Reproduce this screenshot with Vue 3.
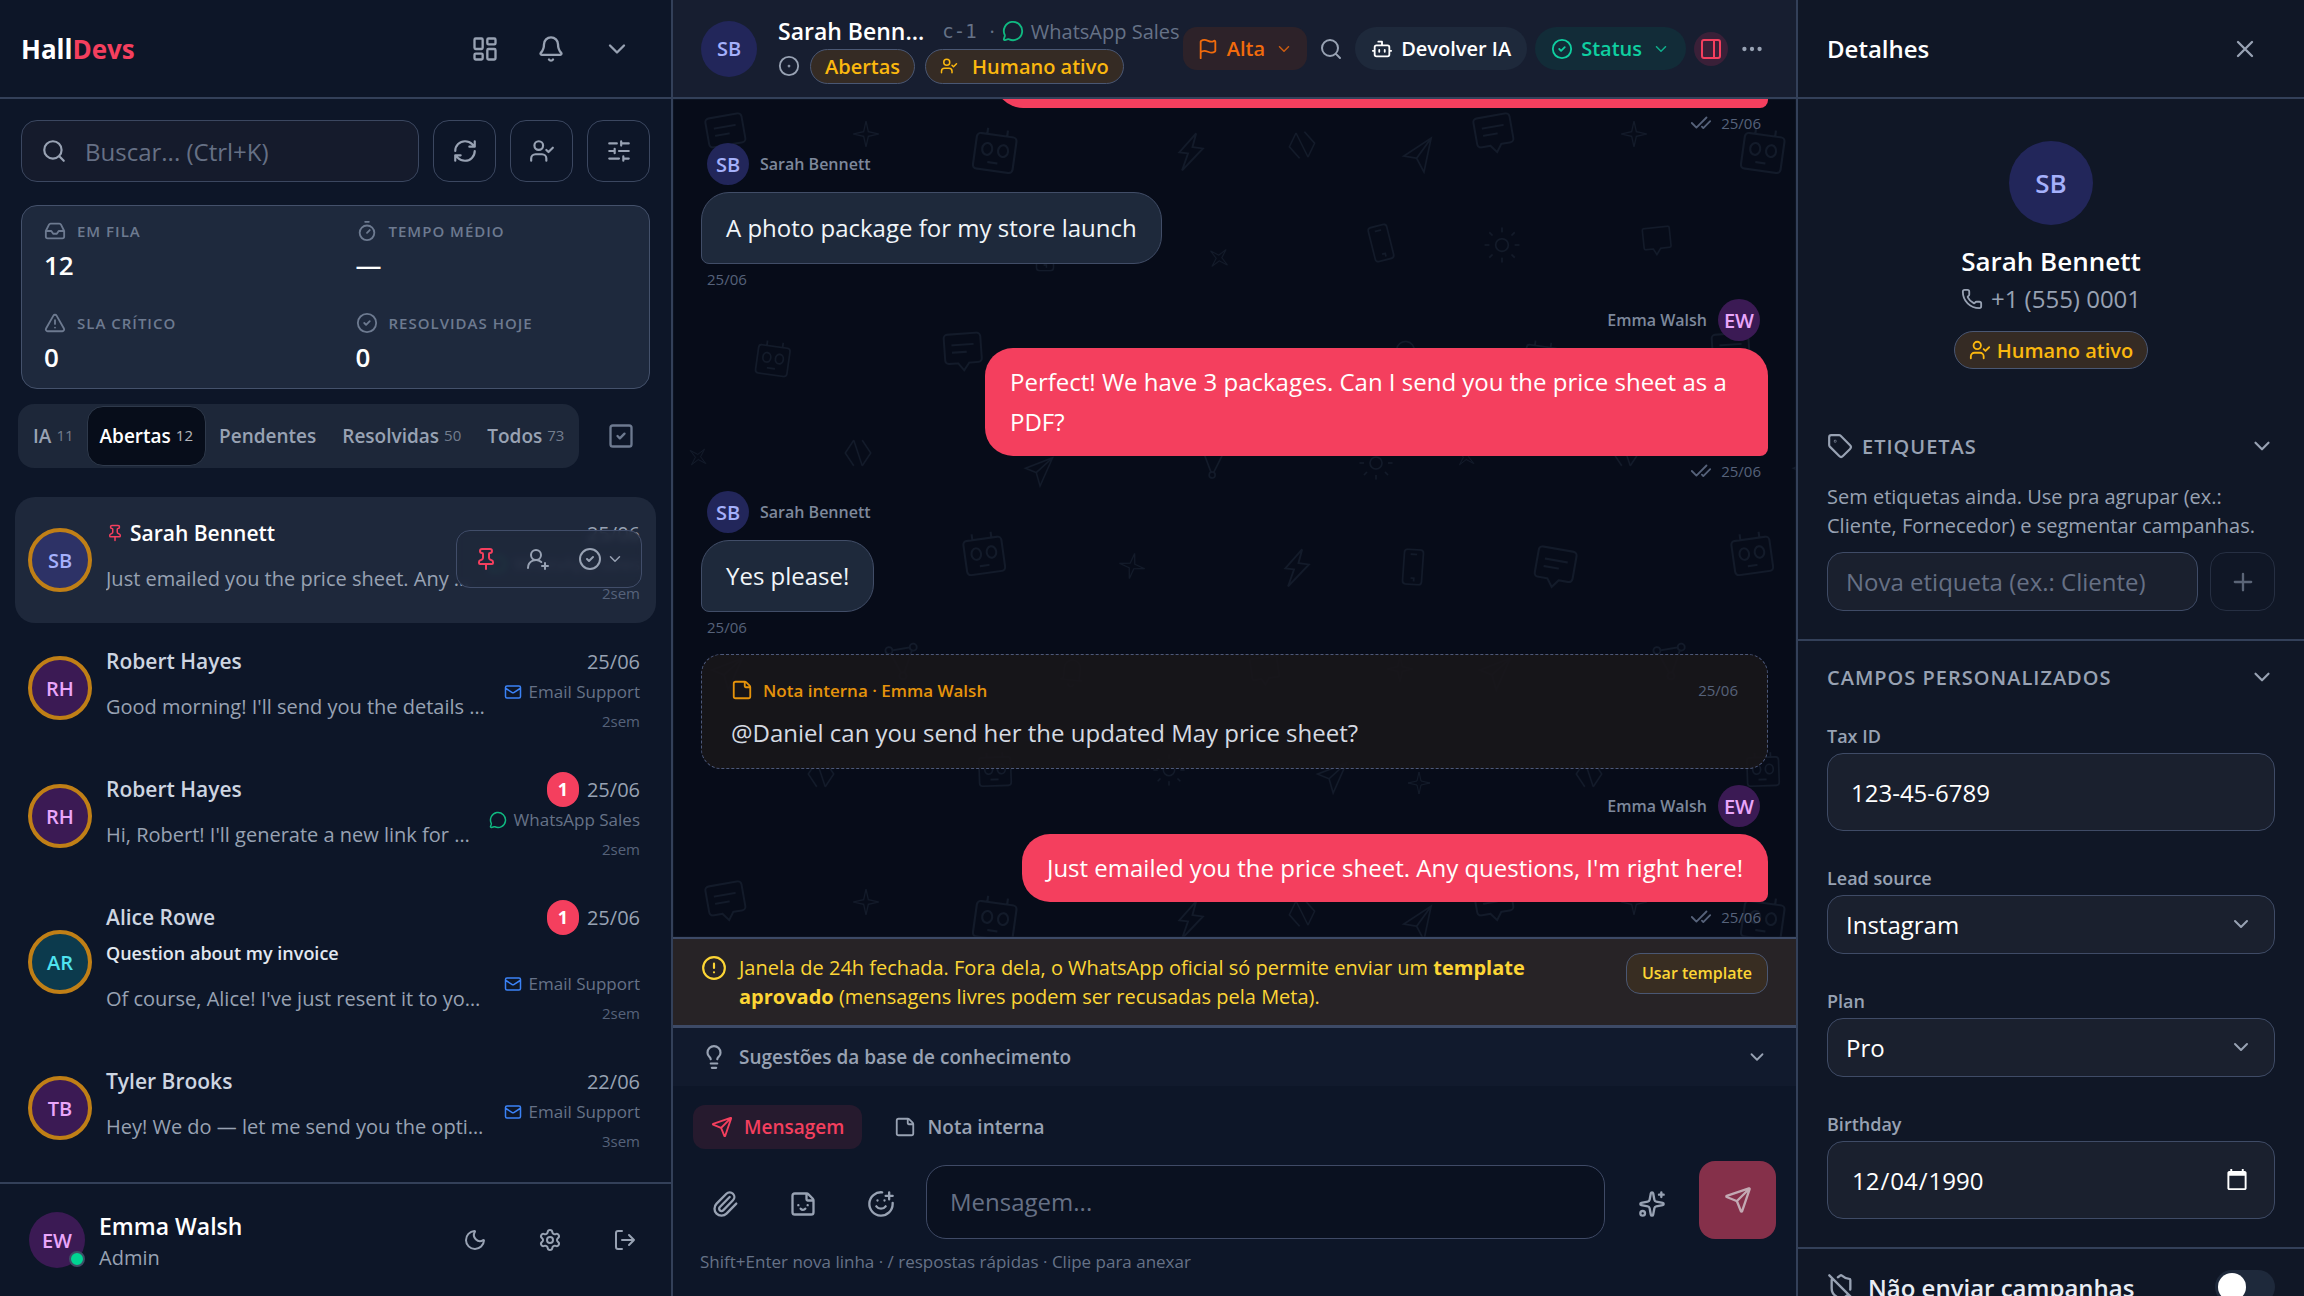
<template>
  <div class="app">
    <aside class="sidebar">
      <header class="bar sidebar-bar">
        <h1 class="logo">Hall<span>Devs</span></h1>
        <nav class="bar-actions">
          <button class="icon-btn" aria-label="Painel"><Icon name="dashboard" class="i28" /></button>
          <button class="icon-btn" aria-label="Notificações"><Icon name="bell" class="i28" /></button>
          <button class="icon-btn" aria-label="Mais"><Icon name="chevron" class="i28" /></button>
        </nav>
      </header>

      <div class="search-row">
        <label class="search">
          <Icon name="search" class="i26" />
          <input v-model="query" type="text" placeholder="Buscar... (Ctrl+K)" aria-label="Buscar" />
        </label>
        <button class="square-btn" aria-label="Atualizar"><Icon name="refresh" class="i26" /></button>
        <button class="square-btn" aria-label="Atribuídas"><Icon name="userCheck" class="i26" /></button>
        <button class="square-btn" aria-label="Filtros"><Icon name="sliders" class="i26" /></button>
      </div>

      <dl class="stats">
        <div v-for="stat in stats" :key="stat.label" class="stat">
          <dt><Icon :name="stat.icon" class="i22" />{{ stat.label }}</dt>
          <dd>{{ stat.value }}</dd>
        </div>
      </dl>

      <div class="tabs-row">
        <div class="tabs">
          <button
            v-for="tab in tabs"
            :key="tab.label"
            :class="['tab', { active: tab.label === activeTab }]"
            @click="activeTab = tab.label"
          >
            {{ tab.label }}<span v-if="tab.count" class="tab-count">{{ tab.count }}</span>
          </button>
        </div>
        <button class="icon-btn select-all" aria-label="Selecionar"><Icon name="checkSquare" class="i28" /></button>
      </div>

      <ul class="conversations">
        <li v-for="(chat, index) in chats" :key="index" :class="['chat', { selected: index === 0 }]">
          <span :class="['avatar', 'ringed', chat.tone]">{{ chat.initials }}</span>
          <div class="chat-body">
            <div class="chat-top">
              <span class="chat-name"><Icon v-if="index === 0" name="pin" class="i18 pink" />{{ chat.name }}</span>
              <span class="chat-date"><b v-if="chat.unread" class="badge">{{ chat.unread }}</b>{{ chat.date }}</span>
            </div>
            <p v-if="chat.subject" class="chat-subject">{{ chat.subject }}</p>
            <div class="chat-bottom">
              <p class="chat-preview">{{ chat.preview }}</p>
              <div class="chat-meta">
                <span class="chat-channel">
                  <Icon :name="chat.mail ? 'mail' : 'message'" :class="['i18', chat.mail ? 'blue' : 'green']" />
                  {{ chat.mail ? 'Email Support' : 'WhatsApp Sales' }}
                </span>
                <span class="chat-age">{{ chat.age }}</span>
              </div>
            </div>
          </div>
          <div v-if="index === 0" class="quick-actions">
            <button aria-label="Desafixar"><Icon name="pin" class="i24 pink" /></button>
            <button aria-label="Atribuir"><Icon name="userPlus" class="i24" /></button>
            <button aria-label="Status"><Icon name="circleCheck" class="i24" /><Icon name="chevron" class="i18" /></button>
          </div>
        </li>
      </ul>

      <footer class="me">
        <span class="avatar medium purple">EW<i class="online"></i></span>
        <div class="me-text">
          <strong>Emma Walsh</strong>
          <span>Admin</span>
        </div>
        <div class="me-actions">
          <button class="icon-btn" aria-label="Tema"><Icon name="moon" class="i24" /></button>
          <button class="icon-btn" aria-label="Configurações"><Icon name="settings" class="i24" /></button>
          <button class="icon-btn" aria-label="Sair"><Icon name="logout" class="i24" /></button>
        </div>
      </footer>
    </aside>

    <main class="thread">
      <header class="bar thread-bar">
        <span class="avatar medium indigo">SB</span>
        <div class="thread-info">
          <div class="thread-line">
            <h2>Sarah Benn…</h2>
            <code>c-1</code>
            <span class="thread-channel">· <Icon name="message" class="i22 green" />WhatsApp Sales</span>
          </div>
          <div class="thread-line">
            <Icon name="circleDot" class="i22" />
            <span class="pill">Abertas</span>
            <span class="pill spaced"><Icon name="userCheck" class="i18" />Humano ativo</span>
          </div>
        </div>
        <div class="thread-actions">
          <button class="chip priority"><Icon name="flag" class="i22" />Alta<Icon name="chevron" class="i18 caret" /></button>
          <button class="icon-btn tight" aria-label="Buscar na conversa"><Icon name="search" class="i24" /></button>
          <button class="chip neutral"><Icon name="bot" class="i22" />Devolver IA</button>
          <button class="chip status"><Icon name="circleCheck" class="i22" />Status<Icon name="chevron" class="i18 caret" /></button>
          <button class="icon-btn panel-toggle" aria-label="Painel de detalhes"><Icon name="panel" class="i24" /></button>
          <button class="icon-btn tight" aria-label="Mais opções"><Icon name="dots" class="i26" /></button>
        </div>
      </header>

      <section class="messages">
        <svg class="wallpaper" aria-hidden="true">
          <defs>
            <pattern id="doodles" width="768" height="768" patternUnits="userSpaceOnUse">
              <g
                v-for="(d, i) in doodles"
                :key="i"
                :transform="`translate(${d[1]} ${d[2]}) rotate(${d[4]}) scale(${d[3] / 24}) translate(-12 -12)`"
              >
                <path :d="shapes[d[0]]" />
              </g>
            </pattern>
          </defs>
          <rect width="100%" height="100%" fill="url(#doodles)" />
        </svg>

        <template v-for="(msg, index) in messages" :key="index">
          <article v-if="msg.note" class="note">
            <div class="note-head">
              <Icon name="note" class="i22" />
              <strong>Nota interna · Emma Walsh</strong>
              <time>25/06</time>
            </div>
            <p>{{ msg.text }}</p>
          </article>
          <article v-else :class="['message', msg.mine ? 'mine' : 'theirs']">
            <div v-if="msg.text" class="message-head">
              <span :class="['avatar', 'small', msg.mine ? 'purple' : 'indigo']">{{ msg.mine ? 'EW' : 'SB' }}</span>
              {{ msg.mine ? 'Emma Walsh' : 'Sarah Bennett' }}
            </div>
            <p :class="['bubble', { blank: !msg.text }]">{{ msg.text }}</p>
            <div class="stamp"><Icon v-if="msg.mine" name="checks" class="i22" /><time>25/06</time></div>
          </article>
        </template>
      </section>

      <section class="window-notice">
        <Icon name="alert" class="i26" />
        <p>
          Janela de 24h fechada. Fora dela, o WhatsApp oficial só permite enviar um
          <b>template aprovado</b> (mensagens livres podem ser recusadas pela Meta).
        </p>
        <button>Usar template</button>
      </section>

      <button class="suggestions">
        <Icon name="bulb" class="i26" />
        Sugestões da base de conhecimento
        <Icon name="chevron" class="i22 push" />
      </button>

      <form class="composer" @submit.prevent>
        <div class="modes">
          <button type="button" class="mode active"><Icon name="send" class="i22" />Mensagem</button>
          <button type="button" class="mode"><Icon name="note" class="i22" />Nota interna</button>
        </div>
        <div class="write-row">
          <div class="tools">
            <button type="button" class="icon-btn tool" aria-label="Anexar"><Icon name="clip" class="i28" /></button>
            <button type="button" class="icon-btn tool" aria-label="Figurinha"><Icon name="sticker" class="i28" /></button>
            <button type="button" class="icon-btn tool" aria-label="Emoji"><Icon name="smile" class="i28" /></button>
          </div>
          <textarea v-model="draft" rows="1" placeholder="Mensagem..." aria-label="Mensagem"></textarea>
          <button type="button" class="icon-btn magic" aria-label="Assistente"><Icon name="sparkles" class="i28" /></button>
          <button class="send" aria-label="Enviar"><Icon name="send" class="i28" /></button>
        </div>
        <p class="hint">Shift+Enter nova linha · / respostas rápidas · Clipe para anexar</p>
      </form>
    </main>

    <aside class="details">
      <header class="bar details-bar">
        <h2>Detalhes</h2>
        <button class="icon-btn" aria-label="Fechar"><Icon name="close" class="i28" /></button>
      </header>

      <section class="profile">
        <span class="avatar large indigo">SB</span>
        <h3>Sarah Bennett</h3>
        <p><Icon name="phone" class="i22" />+1 (555) 0001</p>
        <span class="pill profile-pill"><Icon name="userCheck" class="i22" />Humano ativo</span>
      </section>

      <section class="block">
        <button class="block-head"><Icon name="tag" class="i26" />ETIQUETAS<Icon name="chevron" class="i26 push" /></button>
        <p class="block-text">Sem etiquetas ainda. Use pra agrupar (ex.: Cliente, Fornecedor) e segmentar campanhas.</p>
        <div class="tag-row">
          <input v-model="newTag" class="field" type="text" placeholder="Nova etiqueta (ex.: Cliente)" aria-label="Nova etiqueta" />
          <button class="add-tag" aria-label="Adicionar"><Icon name="plus" class="i28" /></button>
        </div>
      </section>

      <section class="block lined">
        <button class="block-head">CAMPOS PERSONALIZADOS<Icon name="chevron" class="i26 push" /></button>
        <div class="form-item">
          <label for="tax">Tax ID</label>
          <input id="tax" v-model="taxId" class="field tall" type="text" />
        </div>
        <div class="form-item">
          <label for="lead">Lead source</label>
          <div class="select">
            <select id="lead" class="field"><option>Instagram</option></select>
            <Icon name="chevron" class="i24" />
          </div>
        </div>
        <div class="form-item">
          <label for="plan">Plan</label>
          <div class="select">
            <select id="plan" class="field"><option>Pro</option></select>
            <Icon name="chevron" class="i24" />
          </div>
        </div>
        <div class="form-item">
          <label for="birthday">Birthday</label>
          <input id="birthday" v-model="birthday" class="field tall" type="date" />
        </div>
      </section>

      <section class="block lined optout">
        <Icon name="shieldOff" class="i28" />
        <label for="optout">Não enviar campanhas</label>
        <input id="optout" v-model="optOut" class="switch" type="checkbox" role="switch" />
      </section>
    </aside>
  </div>
</template>

<script setup>
import { h, ref } from 'vue'

const paths = {
  dashboard: 'M4 3h5a1 1 0 0 1 1 1v7a1 1 0 0 1-1 1H4a1 1 0 0 1-1-1V4a1 1 0 0 1 1-1z M15 3h5a1 1 0 0 1 1 1v3a1 1 0 0 1-1 1h-5a1 1 0 0 1-1-1V4a1 1 0 0 1 1-1z M15 12h5a1 1 0 0 1 1 1v7a1 1 0 0 1-1 1h-5a1 1 0 0 1-1-1v-7a1 1 0 0 1 1-1z M4 16h5a1 1 0 0 1 1 1v3a1 1 0 0 1-1 1H4a1 1 0 0 1-1-1v-3a1 1 0 0 1 1-1z',
  bell: 'M10.268 21a2 2 0 0 0 3.464 0 M3.262 15.326A1 1 0 0 0 4 17h16a1 1 0 0 0 .74-1.673C19.41 13.956 18 12.499 18 8A6 6 0 0 0 6 8c0 4.499-1.411 5.956-2.738 7.326',
  chevron: 'm6 9 6 6 6-6',
  search: 'm21 21-4.34-4.34 M11 3a8 8 0 1 0 0 16a8 8 0 1 0 0-16z',
  refresh: 'M3 12a9 9 0 0 1 9-9 9.75 9.75 0 0 1 6.74 2.74L21 8 M21 3v5h-5 M21 12a9 9 0 0 1-9 9 9.75 9.75 0 0 1-6.74-2.74L3 16 M8 16H3v5',
  userCheck: 'm16 11 2 2 4-4 M16 21v-2a4 4 0 0 0-4-4H6a4 4 0 0 0-4 4v2 M9 3a4 4 0 1 0 0 8a4 4 0 1 0 0-8z',
  sliders: 'M10 5H3 M12 19H3 M14 3v4 M16 17v4 M21 12h-9 M21 19h-5 M21 5h-7 M8 10v4 M8 12H3',
  inbox: 'M22 12h-6l-2 3h-4l-2-3H2 M5.45 5.11 2 12v6a2 2 0 0 0 2 2h16a2 2 0 0 0 2-2v-6l-3.45-6.89A2 2 0 0 0 16.76 4H7.24a2 2 0 0 0-1.79 1.11z',
  timer: 'M10 2h4 M12 14l3-3 M12 6a8 8 0 1 0 0 16a8 8 0 1 0 0-16z',
  triangle: 'm21.73 18-8-14a2 2 0 0 0-3.48 0l-8 14A2 2 0 0 0 4 21h16a2 2 0 0 0 1.73-3 M12 9v4 M12 17h.01',
  circleCheck: 'M12 2a10 10 0 1 0 0 20a10 10 0 1 0 0-20z m-3 10 2 2 4-4',
  checkSquare: 'M5 3h14a2 2 0 0 1 2 2v14a2 2 0 0 1-2 2H5a2 2 0 0 1-2-2V5a2 2 0 0 1 2-2z M9 12l2 2 4-4',
  pin: 'M12 17v5 M9 10.76a2 2 0 0 1-1.11 1.79l-1.78.9A2 2 0 0 0 5 15.24V16a1 1 0 0 0 1 1h12a1 1 0 0 0 1-1v-.76a2 2 0 0 0-1.11-1.79l-1.78-.9A2 2 0 0 1 15 10.76V7a1 1 0 0 1 1-1 2 2 0 0 0 0-4H8a2 2 0 0 0 0 4 1 1 0 0 1 1 1z',
  userPlus: 'M2 21a8 8 0 0 1 13.292-6 M10 3a5 5 0 1 0 0 10a5 5 0 1 0 0-10z M19 16v6 M22 19h-6',
  mail: 'm22 7-8.991 5.727a2 2 0 0 1-2.009 0L2 7 M4 4h16a2 2 0 0 1 2 2v12a2 2 0 0 1-2 2H4a2 2 0 0 1-2-2V6a2 2 0 0 1 2-2z',
  message: 'M2.992 16.342a2 2 0 0 1 .094 1.167l-1.065 3.29a1 1 0 0 0 1.236 1.168l3.413-.998a2 2 0 0 1 1.099.092 10 10 0 1 0-4.777-4.719',
  moon: 'M20.985 12.486a9 9 0 1 1-9.473-9.472c.405-.022.617.46.402.803a6 6 0 0 0 8.268 8.268c.344-.215.825-.004.803.401',
  settings: 'M9.671 4.136a2.34 2.34 0 0 1 4.659 0 2.34 2.34 0 0 0 3.319 1.915 2.34 2.34 0 0 1 2.33 4.033 2.34 2.34 0 0 0 0 3.831 2.34 2.34 0 0 1-2.33 4.033 2.34 2.34 0 0 0-3.319 1.915 2.34 2.34 0 0 1-4.659 0 2.34 2.34 0 0 0-3.32-1.915 2.34 2.34 0 0 1-2.33-4.033 2.34 2.34 0 0 0 0-3.831A2.34 2.34 0 0 1 6.35 6.051a2.34 2.34 0 0 0 3.319-1.915 M12 9a3 3 0 1 0 0 6a3 3 0 1 0 0-6z',
  logout: 'm16 17 5-5-5-5 M21 12H9 M9 21H5a2 2 0 0 1-2-2V5a2 2 0 0 1 2-2h4',
  circleDot: 'M12 2a10 10 0 1 0 0 20a10 10 0 1 0 0-20z M12 11.5a.5 .5 0 1 0 0 1a.5 .5 0 1 0 0-1z',
  flag: 'M4 22V4a1 1 0 0 1 .4-.8A6 6 0 0 1 8 2c3 0 5 2 7.333 2q2 0 3.067-.8A1 1 0 0 1 20 4v10a1 1 0 0 1-.4.8A6 6 0 0 1 16 16c-3 0-5-2-8-2a6 6 0 0 0-4 1.528',
  bot: 'M12 8V4H8 M6 8h12a2 2 0 0 1 2 2v8a2 2 0 0 1-2 2H6a2 2 0 0 1-2-2v-8a2 2 0 0 1 2-2z M2 14h2 M20 14h2 M15 13v2 M9 13v2',
  panel: 'M5 3h14a2 2 0 0 1 2 2v14a2 2 0 0 1-2 2H5a2 2 0 0 1-2-2V5a2 2 0 0 1 2-2z M15 3v18',
  dots: 'M12 11a1 1 0 1 0 0 2a1 1 0 1 0 0-2z M19 11a1 1 0 1 0 0 2a1 1 0 1 0 0-2z M5 11a1 1 0 1 0 0 2a1 1 0 1 0 0-2z',
  note: 'M21 9a2.4 2.4 0 0 0-.706-1.706l-3.588-3.588A2.4 2.4 0 0 0 15 3H5a2 2 0 0 0-2 2v14a2 2 0 0 0 2 2h14a2 2 0 0 0 2-2z M15 3v5a1 1 0 0 0 1 1h5',
  checks: 'M18 6 7 17l-5-5 m20-2-7.5 7.5L13 16',
  alert: 'M12 2a10 10 0 1 0 0 20a10 10 0 1 0 0-20z M12 8v4 M12 16h.01',
  bulb: 'M15 14c.2-1 .7-1.7 1.5-2.5 1-.9 1.5-2.2 1.5-3.5A6 6 0 0 0 6 8c0 1 .2 2.2 1.5 3.5.7.7 1.3 1.5 1.5 2.5 M9 18h6 M10 22h4',
  send: 'M14.536 21.686a.5.5 0 0 0 .937-.024l6.5-19a.496.496 0 0 0-.635-.635l-19 6.5a.5.5 0 0 0-.024.937l7.93 3.18a2 2 0 0 1 1.112 1.11z m7.318-19.539-10.94 10.939',
  clip: 'm16 6-8.414 8.586a2 2 0 0 0 2.829 2.829l8.414-8.586a4 4 0 1 0-5.657-5.657l-8.379 8.551a6 6 0 1 0 8.485 8.485l8.379-8.551',
  sticker: 'M21 9a2.4 2.4 0 0 0-.706-1.706l-3.588-3.588A2.4 2.4 0 0 0 15 3H5a2 2 0 0 0-2 2v14a2 2 0 0 0 2 2h14a2 2 0 0 0 2-2z M15 3v5a1 1 0 0 0 1 1h5 M8 13h.01 M16 13h.01 M10 16s.8 1 2 1c1.3 0 2-1 2-1',
  smile: 'M22 11v1a10 10 0 1 1-9-10 M8 14s1.5 2 4 2 4-2 4-2 M9 9h.01 M15 9h.01 M16 5h6 M19 2v6',
  sparkles: 'M11.017 2.814a1 1 0 0 1 1.966 0l1.051 5.558a2 2 0 0 0 1.594 1.594l5.558 1.051a1 1 0 0 1 0 1.966l-5.558 1.051a2 2 0 0 0-1.594 1.594l-1.051 5.558a1 1 0 0 1-1.966 0l-1.051-5.558a2 2 0 0 0-1.594-1.594l-5.558-1.051a1 1 0 0 1 0-1.966l5.558-1.051a2 2 0 0 0 1.594-1.594z M20 2v4 M22 4h-4 M4 18a2 2 0 1 0 0 4a2 2 0 1 0 0-4z',
  close: 'M18 6 6 18 M6 6l12 12',
  phone: 'M13.832 16.568a1 1 0 0 0 1.213-.303l.355-.465A2 2 0 0 1 17 15h3a2 2 0 0 1 2 2v3a2 2 0 0 1-2 2A18 18 0 0 1 2 4a2 2 0 0 1 2-2h3a2 2 0 0 1 2 2v3a2 2 0 0 1-.8 1.6l-.468.351a1 1 0 0 0-.292 1.233 14 14 0 0 0 6.392 6.384',
  tag: 'M12.586 2.586A2 2 0 0 0 11.172 2H4a2 2 0 0 0-2 2v7.172a2 2 0 0 0 .586 1.414l8.704 8.704a2.426 2.426 0 0 0 3.42 0l6.58-6.58a2.426 2.426 0 0 0 0-3.42z M7.5 7.25a.25 .25 0 1 0 0 .5a.25 .25 0 1 0 0-.5z',
  plus: 'M5 12h14 M12 5v14',
  shieldOff: 'm2 2 20 20 M5 5a1 1 0 0 0-1 1v7c0 5 3.5 7.5 7.67 8.94a1 1 0 0 0 .67.01c2.35-.82 4.48-1.97 5.9-3.71 M9.309 3.652A12.252 12.252 0 0 0 11.24 2.28a1.17 1.17 0 0 1 1.52 0C14.51 3.81 17 5 19 5a1 1 0 0 1 1 1v7a9.784 9.784 0 0 1-.08 1.264'
}

const Icon = (props) =>
  h('svg', { class: 'icon', viewBox: '0 0 24 24', 'aria-hidden': 'true' }, [h('path', { d: paths[props.name] })])
Icon.props = ['name']

// wallpaper drawings, each on a 24 unit grid
const shapes = {
  lines: 'M4 2h16a2 2 0 0 1 2 2v12a2 2 0 0 1-2 2h-5l-3 4-3-4H4a2 2 0 0 1-2-2V4a2 2 0 0 1 2-2z M6 8h12 M6 12h8',
  bubble: 'M4 3h16a1 1 0 0 1 1 1v12a1 1 0 0 1-1 1h-6l-3 4-2-4H4a1 1 0 0 1-1-1V4a1 1 0 0 1 1-1z',
  star: 'M12 1l2 9 9 2-9 2-2 9-2-9-9-2 9-2z',
  robot: 'M4 4h16a2 2 0 0 1 2 2v14a2 2 0 0 1-2 2H4a2 2 0 0 1-2-2V6a2 2 0 0 1 2-2z M7 4V1 M17 4V1 M8 8.5a2.5 3 0 1 0 0 6a2.5 3 0 1 0 0-6z M16 8.5a2.5 3 0 1 0 0 6a2.5 3 0 1 0 0-6z M9 18h5',
  bolt: 'M14 1 6 13h5l-2 10 10-14h-6z',
  code: 'M9 3 3 12l6 9 M15 3l6 9-6 9 M9 3l6 18',
  plane: 'M21 2 3 12l8 2 4 9z M21 2 11 14',
  phone: 'M8 1h8a2 2 0 0 1 2 2v18a2 2 0 0 1-2 2H8a2 2 0 0 1-2-2V3a2 2 0 0 1 2-2z M10 4h4 M11 19h2v2',
  sun: 'M12 8a4 4 0 1 0 0 8a4 4 0 1 0 0-8z M12 1v3 M12 20v3 M1 12h3 M20 12h3 M4 4l2 2 M18 18l2 2 M4 20l2-2 M18 6l2-2',
  nodes: 'M5 3a2 2 0 1 0 0 4a2 2 0 1 0 0-4z M19 2a2 2 0 1 0 0 4a2 2 0 1 0 0-4z M12 18a2 2 0 1 0 0 4a2 2 0 1 0 0-4z M7 5l10-1 M6 7l5 11 M18 6l-5 12',
  bell: 'M6 17V9a6 6 0 0 1 12 0v8l2 1H4z M10 21a2 2 0 0 0 4 0'
}

// shape, x, y, size, rotation
const doodles = [
  ['lines', 53, 35, 44, -10], ['star', 193, 35, 28, 0], ['robot', 322, 52, 48, 8], ['bolt', 517, 53, 42, 8],
  ['code', 629, 46, 34, -8], ['plane', 745, 56, 38, -4],
  ['phone', 708, 144, 38, -14], ['sun', 61, 146, 38, 0], ['bubble', 216, 142, 36, -6], ['star', 546, 159, 24, 40],
  ['phone', 372, 156, 34, 0],
  ['robot', 100, 260, 38, 8], ['lines', 290, 253, 44, -4], ['bell', 732, 256, 36, 6], ['sun', 703, 364, 36, 0],
  ['star', 25, 358, 22, 40], ['code', 185, 354, 34, 0], ['plane', 365, 371, 34, 8], ['nodes', 540, 364, 36, 4],
  ['robot', 311, 455, 46, -8], ['star', 459, 467, 28, 12], ['bolt', 623, 469, 42, 8], ['phone', 740, 468, 38, 4],
  ['lines', 114, 469, 46, 10],
  ['plane', 53, 573, 38, 8], ['nodes', 229, 563, 42, -4], ['bell', 399, 573, 32, 6], ['bubble', 592, 572, 36, -8],
  ['star', 727, 570, 28, 0],
  ['code', 148, 675, 34, 0], ['robot', 322, 671, 38, -2], ['sun', 496, 671, 34, 0], ['plane', 658, 677, 36, 8],
  ['star', 746, 684, 24, 0]
]

const stats = [
  { icon: 'inbox', label: 'EM FILA', value: '12' },
  { icon: 'timer', label: 'TEMPO MÉDIO', value: '—' },
  { icon: 'triangle', label: 'SLA CRÍTICO', value: '0' },
  { icon: 'circleCheck', label: 'RESOLVIDAS HOJE', value: '0' }
]

const tabs = [
  { label: 'IA', count: 11 },
  { label: 'Abertas', count: 12 },
  { label: 'Pendentes' },
  { label: 'Resolvidas', count: 50 },
  { label: 'Todos', count: 73 }
]

const chats = [
  { initials: 'SB', tone: 'indigo', name: 'Sarah Bennett', preview: 'Just emailed you the price sheet. Any …', date: '25/06', age: '2sem' },
  { initials: 'RH', tone: 'purple', name: 'Robert Hayes', preview: "Good morning! I'll send you the details …", date: '25/06', age: '2sem', mail: true },
  { initials: 'RH', tone: 'purple', name: 'Robert Hayes', preview: "Hi, Robert! I'll generate a new link for …", date: '25/06', age: '2sem', unread: 1 },
  { initials: 'AR', tone: 'teal', name: 'Alice Rowe', subject: 'Question about my invoice', preview: "Of course, Alice! I've just resent it to yo…", date: '25/06', age: '2sem', mail: true, unread: 1 },
  { initials: 'TB', tone: 'purple', name: 'Tyler Brooks', preview: 'Hey! We do — let me send you the opti…', date: '22/06', age: '3sem', mail: true }
]

const messages = [
  { mine: true, text: '' },
  { text: 'A photo package for my store launch' },
  { mine: true, text: 'Perfect! We have 3 packages. Can I send you the price sheet as a PDF?' },
  { text: 'Yes please!' },
  { note: true, text: '@Daniel can you send her the updated May price sheet?' },
  { mine: true, text: "Just emailed you the price sheet. Any questions, I'm right here!" }
]

const activeTab = ref('Abertas')
const query = ref('')
const draft = ref('')
const newTag = ref('')
const taxId = ref('123-45-6789')
const birthday = ref('1990-12-04')
const optOut = ref(false)
</script>

<style>
body {
  background: #0d1628;
}
</style>

<style scoped>
.app {
  display: grid;
  grid-template-columns: 673px minmax(0, 1fr) 506px;
  height: 100vh;
  overflow: hidden;
  background: #0d1628;
  color: #98a2b3;
  font-family: 'Segoe UI', 'Open Sans', 'Noto Sans', sans-serif;
  font-size: 20px;
}

.app * {
  box-sizing: border-box;
}

h1, h2, h3, p, dl, dd, ul {
  margin: 0;
  padding: 0;
}

button, input, select, textarea {
  font: inherit;
  color: inherit;
}

button {
  display: flex;
  align-items: center;
  background: none;
  border: none;
  padding: 0;
  cursor: pointer;
  white-space: nowrap;
}

.icon {
  flex: none;
  width: 24px;
  height: 24px;
  fill: none;
  stroke: currentColor;
  stroke-width: 2;
  stroke-linecap: round;
  stroke-linejoin: round;
}

.i18 { width: 18px; height: 18px; }
.i22 { width: 22px; height: 22px; }
.i24 { width: 24px; height: 24px; }
.i26 { width: 26px; height: 26px; }
.i28 { width: 28px; height: 28px; }

.pink { color: #f43f5e; }
.blue { color: #3b82f6; }
.green { color: #10b981; }
.push { margin-left: auto; }

.icon-btn {
  justify-content: center;
  width: 50px;
  height: 50px;
}

.icon-btn.tight {
  width: 32px;
}

.bar {
  display: flex;
  align-items: center;
  flex: none;
  height: 99px;
  border-bottom: 2px solid #334059;
}

.avatar {
  position: relative;
  display: flex;
  flex: none;
  align-items: center;
  justify-content: center;
  border-radius: 50%;
  font-size: 20px;
  font-weight: 600;
}

.avatar.small { width: 42px; height: 42px; }
.avatar.medium { width: 56px; height: 56px; }
.avatar.large { width: 84px; height: 84px; font-size: 26px; }

.avatar.ringed {
  width: 64px;
  height: 64px;
  border: 4px solid #c07f16;
}

.indigo { background: #22265a; color: #a5b0fb; }
.purple { background: #3b1a54; color: #eaa6fa; }
.teal { background: #0c3a4d; color: #4fe3f0; }

/* sidebar */
.sidebar {
  display: flex;
  flex-direction: column;
  min-height: 0;
  border-right: 2px solid #334059;
}

.sidebar-bar {
  justify-content: space-between;
  padding: 0 29px 0 21px;
}

.logo {
  font-size: 26px;
  font-weight: 700;
  color: #fff;
}

.logo span {
  color: #f43f5e;
}

.bar-actions {
  display: flex;
  gap: 16px;
}

.search-row {
  display: flex;
  gap: 14px;
  padding: 21px 21px 0;
}

.search {
  display: flex;
  flex: 1;
  align-items: center;
  gap: 18px;
  min-width: 0;
  height: 62px;
  padding: 0 19px;
  border: 1px solid #3b4760;
  border-radius: 16px;
  background: #151b2c;
}

.search input {
  flex: 1;
  min-width: 0;
  padding: 0;
  border: none;
  outline: none;
  background: none;
  font-size: 24px;
}

::placeholder {
  color: #667085;
  opacity: 1;
}

.square-btn {
  justify-content: center;
  width: 63px;
  height: 62px;
  border: 1px solid #3b4760;
  border-radius: 16px;
}

.stats {
  display: grid;
  grid-template-columns: 1fr 1fr;
  gap: 24px 40px;
  margin: 23px 21px 0;
  padding: 11px 22px;
  border: 1px solid #44516b;
  border-radius: 16px;
  background: #1e293d;
}

.stat dt {
  display: flex;
  align-items: center;
  gap: 11px;
  height: 28px;
  color: #6d7a90;
  font-size: 15px;
  font-weight: 600;
  letter-spacing: 1px;
}

.stat dd {
  height: 40px;
  color: #fff;
  font-size: 26px;
  font-weight: 600;
  line-height: 40px;
}

.tabs-row {
  display: flex;
  align-items: center;
  justify-content: space-between;
  padding: 15px 22px 0 18px;
}

.tabs {
  display: flex;
  padding: 2px;
  border-radius: 16px;
  background: #1d2739;
}

.tab {
  gap: 5px;
  height: 60px;
  padding: 0 12px;
  border: 1px solid transparent;
  border-radius: 16px;
  font-size: 19px;
  font-weight: 600;
}

.tab.active {
  border-color: #2e394b;
  background: #070d1a;
  color: #fff;
}

.tab-count {
  padding-bottom: 3px;
  font-size: 15px;
  font-weight: 400;
  opacity: 0.7;
}

.select-all {
  width: 56px;
  color: #6d7a90;
}

.conversations {
  display: flex;
  flex: 1;
  flex-direction: column;
  gap: 2px;
  min-height: 0;
  padding: 29px 15px 0;
  overflow: hidden;
  list-style: none;
}

.chat {
  position: relative;
  display: flex;
  align-items: center;
  flex: none;
  gap: 14px;
  padding: 18px 16px 18px 13px;
  border-radius: 20px;
}

.chat.selected {
  background: #1e283b;
}

.chat.selected .avatar {
  background: #2d3266;
}

.chat-body {
  flex: 1;
  min-width: 0;
}

.chat-top {
  display: flex;
  align-items: center;
  justify-content: space-between;
  height: 36px;
}

.chat-name {
  display: flex;
  align-items: center;
  gap: 6px;
  color: #cdd5e1;
  font-size: 21px;
  font-weight: 600;
}

.selected .chat-name {
  color: #fff;
}

.chat-date {
  display: flex;
  align-items: center;
  gap: 8px;
  font-size: 20px;
}

.badge {
  min-width: 32px;
  padding: 0 8px;
  border-radius: 18px;
  background: #f43f5e;
  color: #fff;
  font-size: 18px;
  line-height: 35px;
  text-align: center;
}

.chat-subject {
  height: 36px;
  color: #e2e8f0;
  font-size: 18px;
  font-weight: 600;
  line-height: 36px;
}

.chat-bottom {
  display: flex;
  align-items: center;
  justify-content: space-between;
  height: 54px;
}

.chat-preview {
  flex: 1;
  min-width: 0;
  overflow: hidden;
  font-size: 20px;
  white-space: nowrap;
}

.chat-meta {
  display: flex;
  flex-direction: column;
  align-items: flex-end;
  gap: 5px;
  color: #667287;
}

.chat-channel {
  display: flex;
  align-items: center;
  gap: 7px;
  font-size: 17px;
  line-height: 24px;
}

.chat-age {
  color: #56627a;
  font-size: 15px;
  line-height: 24px;
}

.quick-actions {
  position: absolute;
  top: 33px;
  right: 14px;
  display: flex;
  align-items: center;
  gap: 28px;
  height: 58px;
  padding: 0 17px;
  border: 1px solid #414d69;
  border-radius: 14px;
  background: rgba(30, 40, 59, 0.85);
  backdrop-filter: blur(3px);
}

.quick-actions button {
  gap: 4px;
}

.me {
  display: flex;
  align-items: center;
  flex: none;
  height: 114px;
  padding: 0 21px 0 29px;
  border-top: 2px solid #334059;
}

.online {
  position: absolute;
  right: 0;
  bottom: 1px;
  width: 16px;
  height: 16px;
  border: 2px solid #3d4f66;
  border-radius: 50%;
  background: #00d492;
}

.me-text {
  display: flex;
  flex: 1;
  flex-direction: column;
  padding: 4px 0 0 14px;
  line-height: 32px;
}

.me-text strong {
  color: #fff;
  font-size: 23px;
  font-weight: 600;
}

.me-actions {
  display: flex;
  gap: 25px;
}

/* conversation */
.thread {
  display: flex;
  flex-direction: column;
  min-width: 0;
  min-height: 0;
  border-right: 2px solid #334059;
}

.thread-bar {
  padding: 0 28px 0 28px;
  background: #171e30;
}

.thread-info {
  flex: 1;
  min-width: 0;
  padding-left: 21px;
}

.thread-line {
  display: flex;
  align-items: center;
  gap: 10px;
  height: 35px;
  white-space: nowrap;
}

.thread-line h2 {
  color: #fff;
  font-size: 23px;
  font-weight: 600;
}

.thread-line code {
  padding: 0 3px 0 8px;
  color: #667287;
  font-family: Consolas, 'DejaVu Sans Mono', monospace;
  font-size: 19px;
}

.thread-channel {
  display: flex;
  align-items: center;
  gap: 7px;
  color: #667287;
}

.pill {
  display: flex;
  align-items: center;
  gap: 6px;
  height: 35px;
  padding: 0 14px;
  border: 1px solid #4a5773;
  border-radius: 18px;
  background: #352b24;
  color: #fbb80f;
  font-weight: 600;
}

.pill.spaced {
  gap: 14px;
}

.thread-actions {
  display: flex;
  align-items: center;
  flex: none;
  gap: 8px;
}

.chip {
  gap: 8px;
  height: 43px;
  padding: 0 16px;
  border-radius: 22px;
  font-weight: 600;
}

.chip.priority {
  padding: 0 14px;
  border-radius: 14px;
  background: #2d2229;
  color: #f26b0c;
}

.chip.neutral {
  background: #1e293b;
  color: #fff;
}

.chip.status {
  background: #122c38;
  color: #0fcfa0;
}

.caret {
  margin-left: 2px;
  opacity: 0.8;
}

.panel-toggle {
  width: 34px;
  height: 34px;
  border-radius: 50%;
  background: #3a2038;
  color: #f43f5e;
}

.messages {
  position: relative;
  display: flex;
  flex: 1;
  flex-direction: column;
  justify-content: flex-end;
  gap: 9px;
  min-height: 0;
  padding: 0 28px 9px;
  overflow: hidden;
  background: #070c19;
}

.wallpaper {
  position: absolute;
  inset: 0;
  width: 100%;
  height: 100%;
  fill: none;
  stroke: #131b2a;
  stroke-width: 1;
}

.message {
  position: relative;
  display: flex;
  flex: none;
  flex-direction: column;
  align-items: flex-start;
}

.message.mine {
  align-items: flex-end;
}

.message-head {
  display: flex;
  align-items: center;
  gap: 11px;
  height: 42px;
  margin-bottom: 7px;
  padding: 0 8px 0 6px;
  color: #7d889b;
  font-size: 16px;
  font-weight: 600;
}

.mine .message-head {
  flex-direction: row-reverse;
}

.bubble {
  max-width: 783px;
  padding: 15px 24px;
  border: 1px solid #414d67;
  border-radius: 28px 28px 28px 8px;
  background: #1e293b;
  color: #f1f5f9;
  font-size: 24px;
  line-height: 40px;
}

.mine .bubble {
  padding: 14px 25px;
  border: none;
  border-radius: 28px 28px 8px 28px;
  background: #f43f5e;
  color: #fff;
}

.bubble.blank {
  width: 773px;
  height: 68px;
}

.stamp {
  display: flex;
  align-items: center;
  gap: 9px;
  height: 22px;
  margin-top: 4px;
  padding: 0 7px 0 6px;
  color: #56627a;
  font-size: 15px;
}

.note {
  position: relative;
  flex: none;
  margin: 7px 0;
  padding: 20px 29px 15px;
  border: 1px dashed #4c587a;
  border-radius: 20px;
  background: rgba(24, 22, 26, 0.9);
}

.note-head {
  display: flex;
  align-items: center;
  gap: 10px;
  height: 30px;
  color: #e5930b;
  font-size: 17px;
}

.note-head strong {
  font-weight: 600;
}

.note-head time {
  margin-left: auto;
  color: #56627a;
  font-size: 15px;
}

.note p {
  padding-top: 8px;
  color: #d5dae2;
  font-size: 24px;
  line-height: 40px;
}

.window-notice {
  display: flex;
  flex: none;
  gap: 12px;
  padding: 14px 28px;
  border-top: 2px solid #3d4a66;
  border-bottom: 3px solid #3d4a66;
  background: #272326;
  color: #fcd535;
  line-height: 29px;
}

.window-notice .icon {
  margin-top: 2px;
}

.window-notice p {
  flex: 1;
  max-width: 820px;
}

.window-notice button {
  height: 41px;
  margin-left: auto;
  padding: 0 15px;
  border: 1px solid #4a5773;
  border-radius: 14px;
  background: #382d22;
  font-size: 16px;
  font-weight: 600;
}

.suggestions {
  flex: none;
  gap: 12px;
  height: 58px;
  padding: 0 28px;
  background: #111a2d;
  font-size: 19px;
  font-weight: 600;
}

.composer {
  flex: none;
  padding: 19px 20px 22px;
}

.modes {
  display: flex;
  gap: 14px;
}

.mode {
  gap: 11px;
  height: 44px;
  padding: 0 18px;
  border-radius: 12px;
  font-size: 19px;
  font-weight: 600;
}

.mode.active {
  background: #261a2e;
  color: #f43f5e;
}

.write-row {
  display: flex;
  align-items: center;
  padding-top: 12px;
}

.tools {
  display: flex;
  gap: 28px;
  padding: 8px 20px 0 7px;
}

.magic {
  margin: 8px 22px 0;
}

textarea {
  flex: 1;
  min-width: 0;
  height: 74px;
  margin-top: 4px;
  padding: 20px 23px;
  border: 1px solid #3f4a66;
  border-radius: 20px;
  outline: none;
  background: #0a1120;
  font-size: 24px;
  line-height: 32px;
  resize: none;
}

.send {
  justify-content: center;
  width: 77px;
  height: 78px;
  border-radius: 16px;
  background: #85304a;
  color: #c3a9b3;
}

.hint {
  padding: 11px 7px 0;
  color: #667287;
  font-size: 17px;
  line-height: 24px;
}

/* details */
.details {
  display: flex;
  flex-direction: column;
  min-height: 0;
  overflow: hidden;
  background: #101726;
}

.details-bar {
  justify-content: space-between;
  padding: 0 34px 0 29px;
}

.details-bar h2 {
  color: #fff;
  font-size: 24px;
  font-weight: 600;
}

.profile {
  display: flex;
  flex: none;
  flex-direction: column;
  align-items: center;
  padding-top: 42px;
}

.profile h3 {
  margin-top: 16px;
  color: #fff;
  font-size: 26px;
  font-weight: 600;
  line-height: 40px;
}

.profile p {
  display: flex;
  align-items: center;
  gap: 8px;
  font-size: 24px;
  line-height: 36px;
}

.profile-pill {
  height: 38px;
  margin-top: 14px;
  border-radius: 20px;
}

.block {
  flex: none;
  padding: 55px 29px 28px;
}

.lined {
  padding-top: 14px;
  border-top: 2px solid #334059;
}

.block-head {
  gap: 9px;
  width: 100%;
  height: 44px;
  font-weight: 600;
  letter-spacing: 1px;
}

.block-text {
  padding: 14px 0 12px;
  line-height: 29px;
}

.tag-row {
  display: flex;
  gap: 12px;
}

.field {
  flex: 1;
  min-width: 0;
  width: 100%;
  height: 59px;
  padding: 0 18px;
  border: 1px solid #3f4b66;
  border-radius: 16px;
  outline: none;
  background: #1a202e;
  color: #fff;
  font-size: 24px;
  appearance: none;
}

.field.tall {
  height: 78px;
  padding: 0 23px;
  color-scheme: dark;
}

.add-tag {
  justify-content: center;
  width: 65px;
  height: 59px;
  border: 1px solid #262f42;
  border-radius: 16px;
  color: #5b6577;
}

.form-item {
  padding-top: 24px;
}

.form-item + .form-item {
  padding-top: 34px;
}

.form-item label {
  display: block;
  margin-bottom: 4px;
  font-size: 18px;
  font-weight: 600;
  line-height: 26px;
}

.select {
  position: relative;
  display: flex;
}

.select .icon {
  position: absolute;
  top: 17px;
  right: 22px;
  pointer-events: none;
}

.optout {
  display: flex;
  align-items: center;
  gap: 13px;
  padding-top: 21px;
}

.optout label {
  flex: 1;
  color: #e8edf4;
  font-size: 24px;
  font-weight: 600;
}

.switch {
  width: 60px;
  height: 34px;
  margin: 0;
  border-radius: 17px;
  background: #1e293b;
  appearance: none;
}

.switch::before {
  content: '';
  display: block;
  width: 28px;
  height: 28px;
  margin: 3px;
  border-radius: 50%;
  background: #fff;
}

.switch:checked::before {
  margin-left: 29px;
}
</style>
